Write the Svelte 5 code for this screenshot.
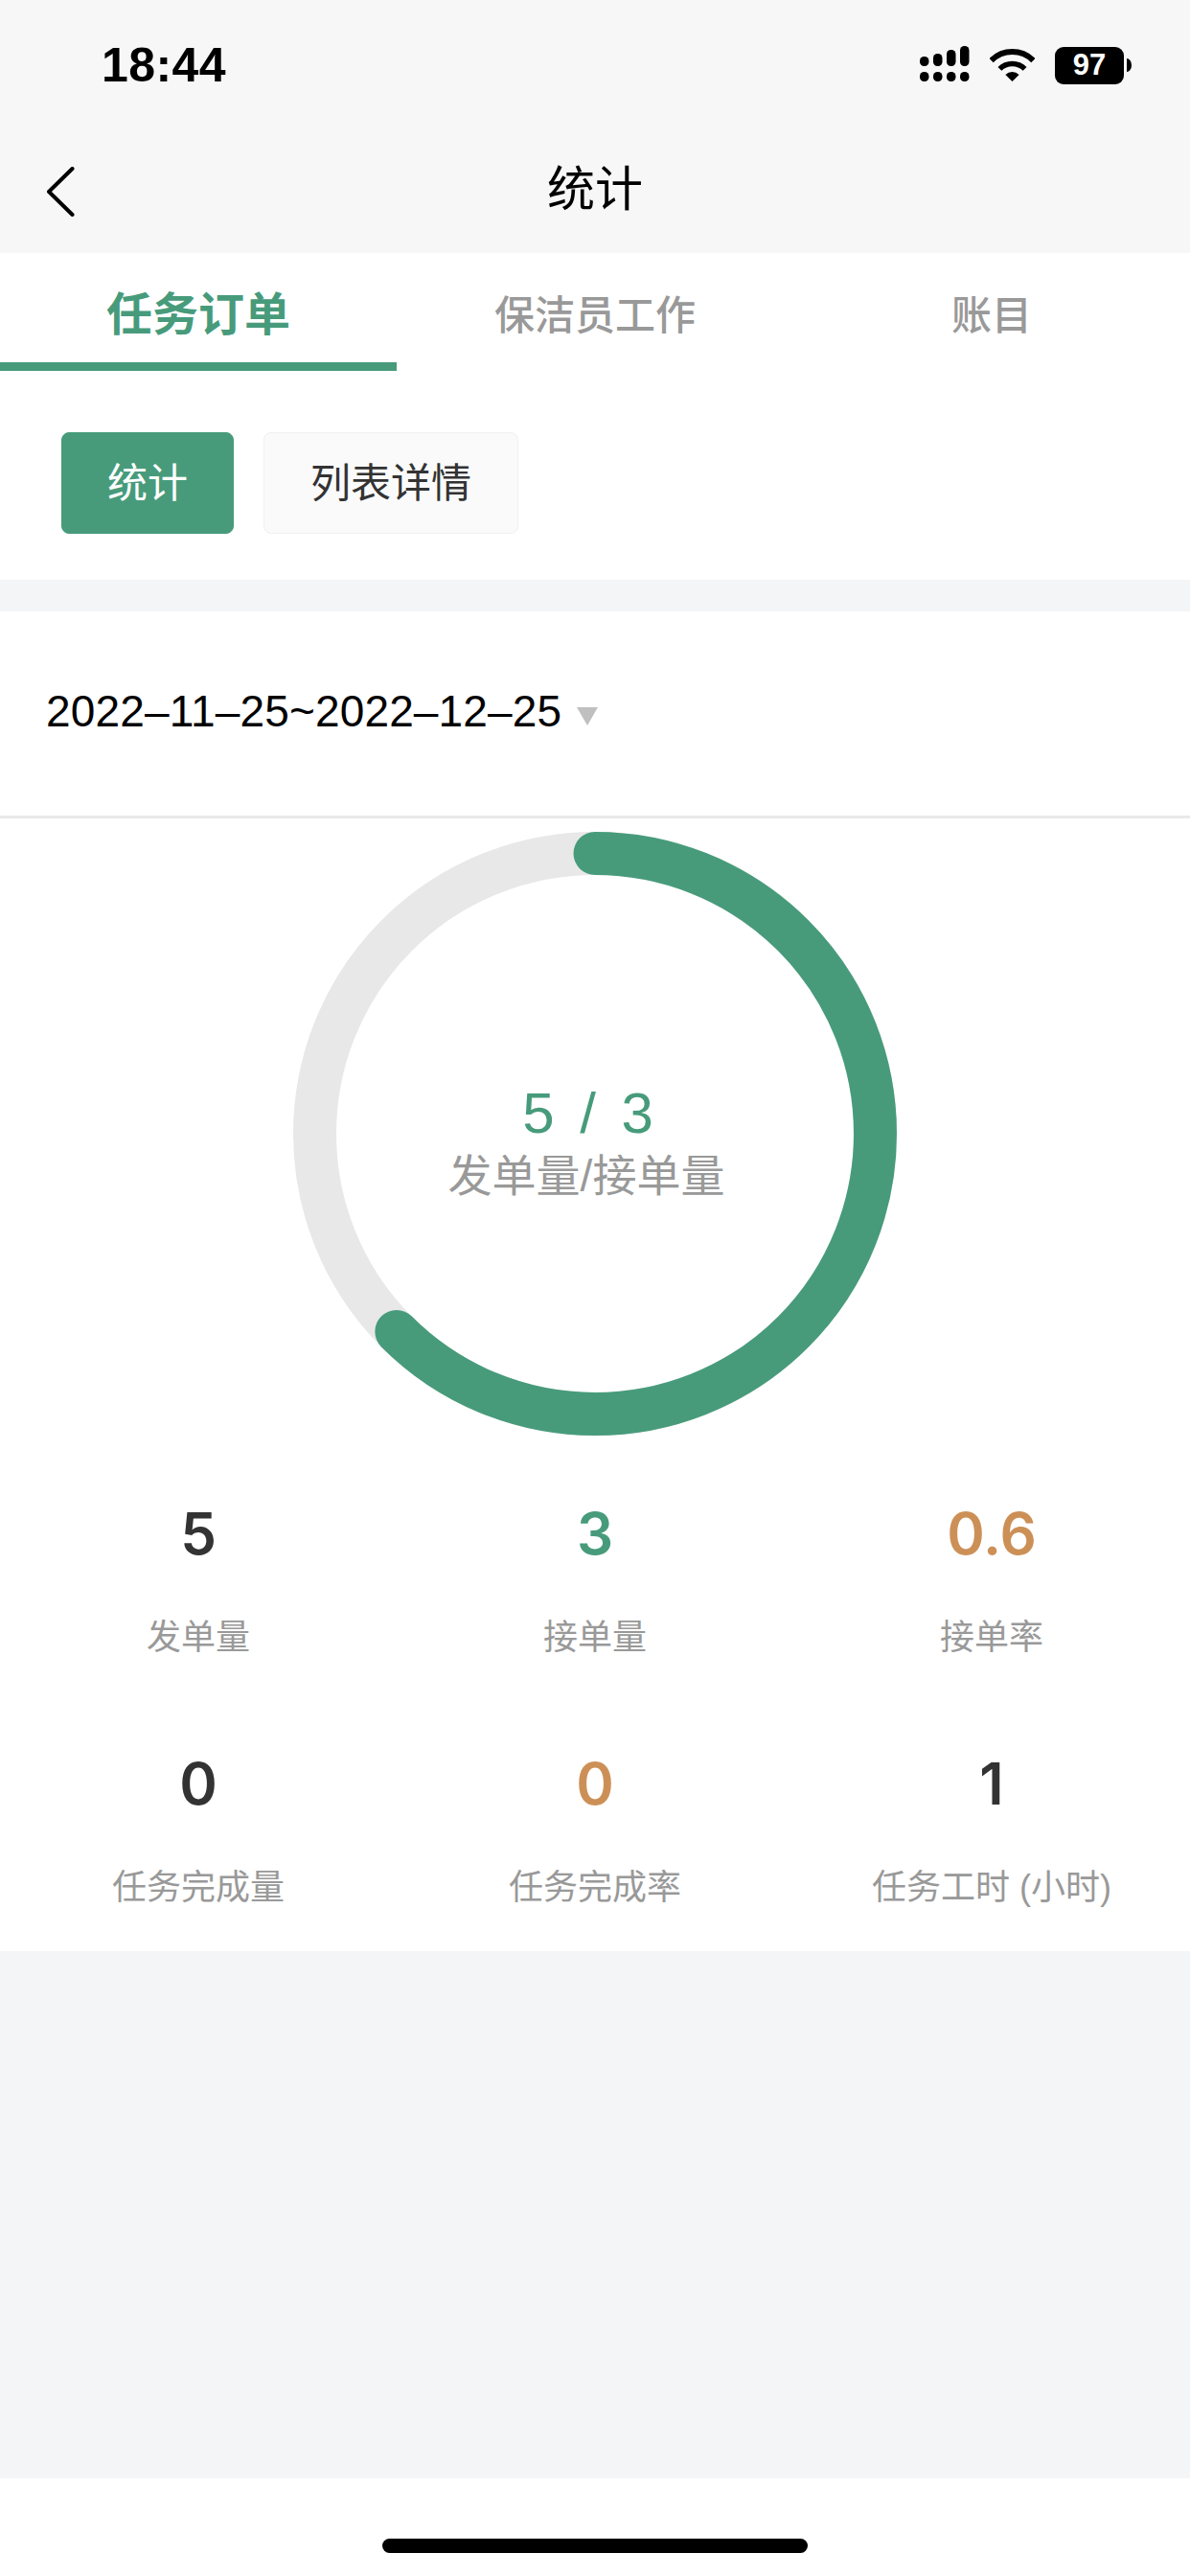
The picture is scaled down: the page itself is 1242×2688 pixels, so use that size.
<script>
    const tabs = [
        { label: "任务订单", active: true },
        { label: "保洁员工作", active: false },
        { label: "账目", active: false }
    ];

    const stats = [
        { value: "5", label: "发单量", color: "dark" },
        { value: "3", label: "接单量", color: "green" },
        { value: "0.6", label: "接单率", color: "orange" },
        { value: "0", label: "任务完成量", color: "dark" },
        { value: "0", label: "任务完成率", color: "orange" },
        { value: "1", label: "任务工时 (小时)", color: "dark" }
    ];

    const signalBars = [
        { top: 33, h: 10 },
        { top: 30, h: 13 },
        { top: 26, h: 17 },
        { top: 22, h: 21 }
    ];

    const RING_RADIUS = 292.5;
    const RING_STROKE = 45;
    const RING_PROGRESS = 0.625;
    const circumference = 2 * Math.PI * RING_RADIUS;
</script>

<div class="page">
    <header class="header">
        <div class="status">
            <span class="time">18:44</span>
            <div class="status-icons">
                <svg class="signal" viewBox="0 0 52 40" width="52" height="40">
                    {#each signalBars as bar, i}
                        <rect x={i * 14} y={bar.top - 22} width="9.5" height={bar.h} rx="4.5" fill="#000" />
                        <rect x={i * 14} y="27" width="9.5" height="10" rx="4.5" fill="#000" />
                    {/each}
                </svg>
                <svg class="wifi" viewBox="0 0 47 36" width="47" height="36">
                    <path d="M1.6 13.1 A31 31 0 0 1 45.4 13.1" fill="none" stroke="#000" stroke-width="6" />
                    <path d="M10.4 21.9 A18.5 18.5 0 0 1 36.6 21.9" fill="none" stroke="#000" stroke-width="5.5" />
                    <path d="M23.5 35 L16.4 27.9 A10 10 0 0 1 30.6 27.9 Z" fill="#000" />
                </svg>
                <div class="battery"><span>97</span></div>
                <svg class="battery-tip" viewBox="0 0 5 14" width="5" height="14">
                    <path d="M0 0 A5 7 0 0 1 0 14 Z" fill="#000" />
                </svg>
            </div>
        </div>
        <div class="nav">
            <svg class="back" viewBox="0 0 30 52" width="30" height="52">
                <path d="M27.5 2 L3 26 L27.5 50" fill="none" stroke="#000" stroke-width="4" stroke-linecap="round" stroke-linejoin="round" />
            </svg>
            <span class="title">统计</span>
        </div>
    </header>

    <section class="top">
        <div class="tabs">
            {#each tabs as tab}
                <div class="tab" class:active={tab.active}>{tab.label}</div>
            {/each}
        </div>
        <div class="switch">
            <div class="btn on">统计</div>
            <div class="btn">列表详情</div>
        </div>
    </section>

    <section class="card">
        <div class="date">
            <span>2022–11–25~2022–12–25</span>
            <i class="caret"></i>
        </div>
        <div class="ring-wrap">
            <div class="ring">
                <svg viewBox="0 0 630 630" width="630" height="630">
                    <circle cx="315" cy="315" r={RING_RADIUS} fill="none" stroke="#e8e8e8" stroke-width={RING_STROKE} />
                    <circle cx="315" cy="315" r={RING_RADIUS} fill="none" stroke="#479b7b" stroke-width={RING_STROKE}
                        stroke-linecap="round"
                        stroke-dasharray="{circumference * RING_PROGRESS} {circumference}"
                        transform="rotate(-90 315 315)" />
                </svg>
                <div class="ring-text">
                    <div class="ratio">5 / 3</div>
                    <div class="ratio-label">发单量/接单量</div>
                </div>
            </div>
        </div>
        <div class="stats">
            {#each stats as s}
                <div class="stat">
                    <div class="value {s.color}">{s.value}</div>
                    <div class="label">{s.label}</div>
                </div>
            {/each}
        </div>
    </section>

    <div class="filler"></div>

    <footer class="footer">
        <div class="home"></div>
    </footer>
</div>

<style>
    :global(body) {
        margin: 0;
        background: #fff;
    }

    .page {
        width: 1242px;
        height: 2688px;
        display: flex;
        flex-direction: column;
        font-family: "Liberation Sans", "Noto Sans CJK SC", sans-serif;
        background: #f4f5f7;
    }

    .header {
        height: 264px;
        background: #f7f7f7;
        flex: none;
    }

    .status {
        height: 132px;
        padding: 0 61px 0 106px;
        box-sizing: border-box;
        display: flex;
        align-items: center;
        justify-content: space-between;
    }

    .time {
        font-size: 50px;
        font-weight: 700;
        letter-spacing: 0.4px;
        color: #000;
        margin-top: 4px;
    }

    .status-icons {
        display: flex;
        align-items: center;
        margin-top: 4px;
    }

    .signal {
        margin-right: 21px;
    }

    .wifi {
        margin-right: 21px;
    }

    .battery {
        width: 72px;
        height: 39px;
        border-radius: 9px;
        background: #000;
        color: #fff;
        font-size: 31px;
        font-weight: 700;
        display: flex;
        align-items: center;
        justify-content: center;
        margin-right: 3px;
    }

    .nav {
        height: 132px;
        position: relative;
        display: flex;
        align-items: center;
        justify-content: center;
        padding-bottom: 10px;
        box-sizing: border-box;
    }

    .back {
        position: absolute;
        left: 48px;
        top: 42px;
    }

    .title {
        font-size: 50px;
        color: #000;
        font-family: "Noto Sans CJK SC", sans-serif;
    }

    .top {
        background: #fff;
        height: 341px;
        flex: none;
    }

    .tabs {
        display: grid;
        grid-template-columns: repeat(3, 1fr);
        height: 123px;
    }

    .tab {
        font-family: "Noto Sans CJK SC", sans-serif;
        font-size: 42px;
        font-weight: 500;
        color: #999;
        text-align: center;
        line-height: 124px;
    }

    .tab.active {
        font-size: 48px;
        font-weight: 700;
        color: #479b7b;
        line-height: 120px;
        border-bottom: 9px solid #479b7b;
        box-sizing: content-box;
        height: 114px;
    }

    .switch {
        display: flex;
        gap: 31px;
        padding: 64px 0 0 64px;
    }

    .btn {
        font-family: "Noto Sans CJK SC", sans-serif;
        height: 106px;
        width: 266px;
        box-sizing: border-box;
        border: 1px solid #f0f0f0;
        border-radius: 8px;
        background: #fafafa;
        color: #333;
        font-size: 42px;
        display: flex;
        align-items: center;
        justify-content: center;
        padding-bottom: 8px;
    }

    .btn.on {
        width: 180px;
        background: #479b7b;
        border-color: #479b7b;
        color: #fff;
    }

    .card {
        margin-top: 33px;
        background: #fff;
        height: 1398px;
        flex: none;
    }

    .date {
        height: 216px;
        box-sizing: border-box;
        border-bottom: 3px solid #e9e9e9;
        padding: 0 0 5px 48px;
        display: flex;
        align-items: center;
        color: #000;
        font-size: 46px;
        letter-spacing: 0.15px;
    }

    .caret {
        width: 0;
        height: 0;
        margin: 11px 0 0 16px;
        border-left: 11px solid transparent;
        border-right: 11px solid transparent;
        border-top: 19px solid #c0c0c0;
    }

    .ring-wrap {
        display: flex;
        justify-content: center;
        padding-top: 14px;
    }

    .ring {
        position: relative;
        width: 630px;
        height: 630px;
    }

    .ring svg {
        display: block;
    }

    .ring-text {
        position: absolute;
        left: 0;
        right: 18px;
        top: 0;
        text-align: center;
    }

    .ratio {
        margin-top: 260px;
        padding-left: 6px;
        font-size: 60px;
        line-height: 68px;
        color: #479b7b;
        letter-spacing: 3px;
        word-spacing: 4px;
    }

    .ratio-label {
        font-size: 46px;
        line-height: 56px;
        color: #999;
        margin-top: 3px;
    }

    .stats {
        display: grid;
        grid-template-columns: repeat(3, 1fr);
        grid-auto-rows: 261px;
        padding-top: 67px;
    }

    .stat {
        text-align: center;
    }

    .value {
        font-size: 60px;
        line-height: 70px;
        font-weight: 600;
        font-family: "Inter", "Liberation Sans", sans-serif;
    }

    .dark {
        color: #333;
    }

    .green {
        color: #479b7b;
    }

    .orange {
        color: #cc9057;
    }

    .label {
        margin-top: 54px;
        font-size: 36px;
        line-height: 40px;
        color: #999;
    }

    .filler {
        flex: 1;
    }

    .footer {
        height: 102px;
        flex: none;
        background: #fff;
        display: flex;
        justify-content: center;
    }

    .home {
        width: 444px;
        height: 15px;
        margin-top: 63px;
        border-radius: 8px;
        background: #000;
    }
</style>
